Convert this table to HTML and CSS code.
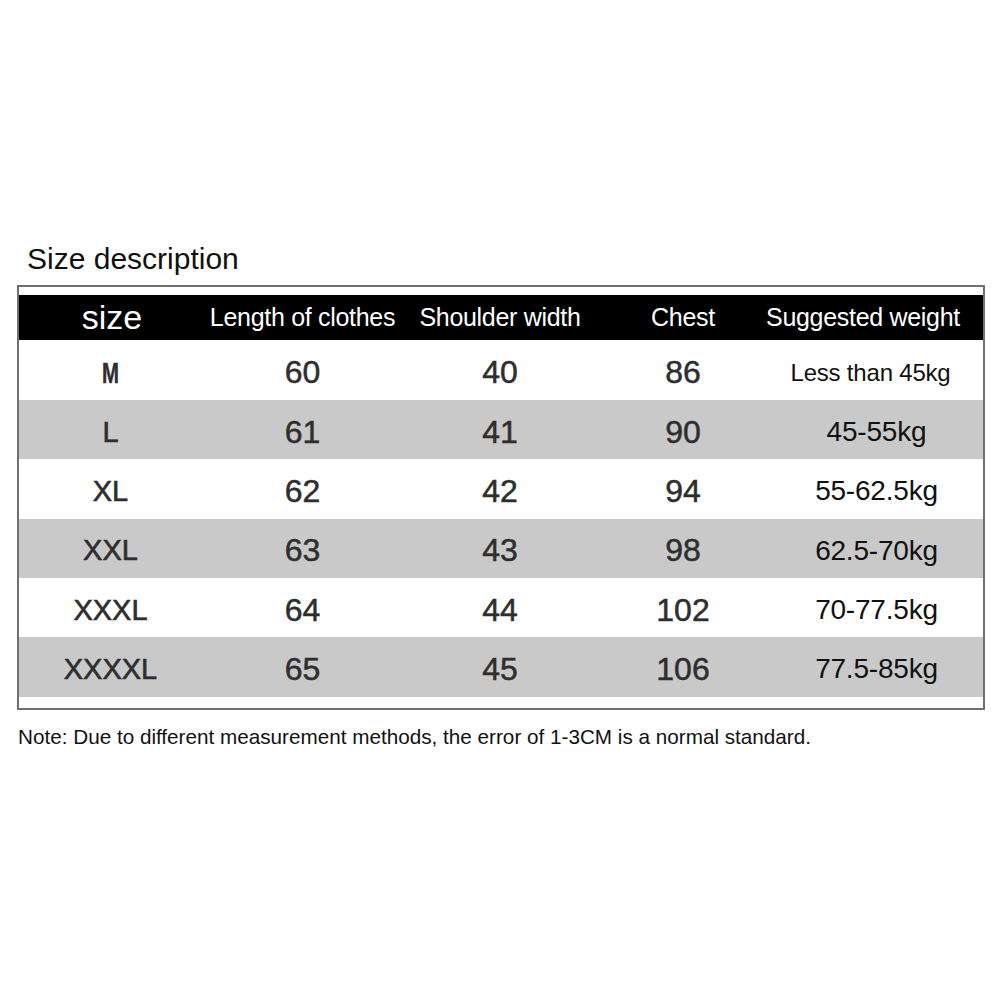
FILE: index.html
```html
<!DOCTYPE html>
<html>
<head>
<meta charset="utf-8">
<link rel="stylesheet" href="styles.css">
</head>
<body>
<div class="page">
  <h1 class="title">Size description</h1>
  <div class="table">
    <div class="row head">
      <div class="cell size-h">size</div>
      <div class="cell">Length of clothes</div>
      <div class="cell">Shoulder width</div>
      <div class="cell">Chest</div>
      <div class="cell wt-h">Suggested weight</div>
    </div>
    <div class="row">
      <div class="cell sz"><span class="narrow">M</span></div>
      <div class="cell num">60</div>
      <div class="cell num">40</div>
      <div class="cell num">86</div>
      <div class="cell wt wt-small">Less than 45kg</div>
    </div>
    <div class="row alt">
      <div class="cell sz">L</div>
      <div class="cell num">61</div>
      <div class="cell num">41</div>
      <div class="cell num">90</div>
      <div class="cell wt">45-55kg</div>
    </div>
    <div class="row">
      <div class="cell sz">XL</div>
      <div class="cell num">62</div>
      <div class="cell num">42</div>
      <div class="cell num">94</div>
      <div class="cell wt">55-62.5kg</div>
    </div>
    <div class="row alt">
      <div class="cell sz">XXL</div>
      <div class="cell num">63</div>
      <div class="cell num">43</div>
      <div class="cell num">98</div>
      <div class="cell wt">62.5-70kg</div>
    </div>
    <div class="row">
      <div class="cell sz">XXXL</div>
      <div class="cell num">64</div>
      <div class="cell num">44</div>
      <div class="cell num">102</div>
      <div class="cell wt">70-77.5kg</div>
    </div>
    <div class="row alt">
      <div class="cell sz">XXXXL</div>
      <div class="cell num">65</div>
      <div class="cell num">45</div>
      <div class="cell num">106</div>
      <div class="cell wt">77.5-85kg</div>
    </div>
  </div>
  <p class="note">Note: Due to different measurement methods, the error of 1-3CM is a normal standard.</p>
</div>
</body>
</html>
```
FILE: styles.css
```css
html, body {
  margin: 0;
  padding: 0;
  background: #ffffff;
}
body {
  font-family: "Liberation Sans", Arial, sans-serif;
  color: #111;
}
.page {
  padding-top: 242px;
}
.title {
  margin: 0 0 9px 27px;
  font-size: 30px;
  font-weight: normal;
  line-height: 34px;
  color: #111;
}
.table {
  margin-left: 17px;
  width: 968px;
  box-sizing: border-box;
  border: 2px solid #707070;
  padding: 8px 0 11px 0;
}
.row {
  display: grid;
  grid-template-columns: 186px 195px 200px 166px 217px;
  height: 59.33px;
  align-items: center;
}
.row.head {
  background: #000;
  height: 45px;
  color: #fff;
}
.row.alt {
  background: #c9c9c9;
}
.row.head + .row {
  height: 60px;
}
.cell {
  text-align: center;
  white-space: nowrap;
}
.row:not(.head) .cell {
  padding-top: 5px;
}
.head .cell {
  font-size: 25px;
  letter-spacing: -0.3px;
}
.head .size-h {
  font-size: 34px;
  letter-spacing: 0;
}
.head .wt-h {
  padding-right: 23px;
}
.num {
  font-size: 32px;
  color: #2e2e2e;
  -webkit-text-stroke: 0.5px #2e2e2e;
}
.sz {
  font-size: 29px;
  color: #2e2e2e;
  -webkit-text-stroke: 0.6px #2e2e2e;
  padding-right: 3px;
}
.narrow {
  display: inline-block;
  font-weight: bold;
  font-size: 30px;
  transform: scaleX(0.68);
  -webkit-text-stroke: 0.5px #2e2e2e;
}
.wt {
  font-size: 28px;
  color: #111;
  letter-spacing: -0.2px;
  padding-left: 4px;
}
.wt.wt-small {
  font-size: 24px;
  padding-left: 0;
  padding-right: 8px;
}
.note {
  margin: 15px 0 0 18px;
  font-size: 20.7px;
  line-height: 24px;
  color: #111;
}
```
